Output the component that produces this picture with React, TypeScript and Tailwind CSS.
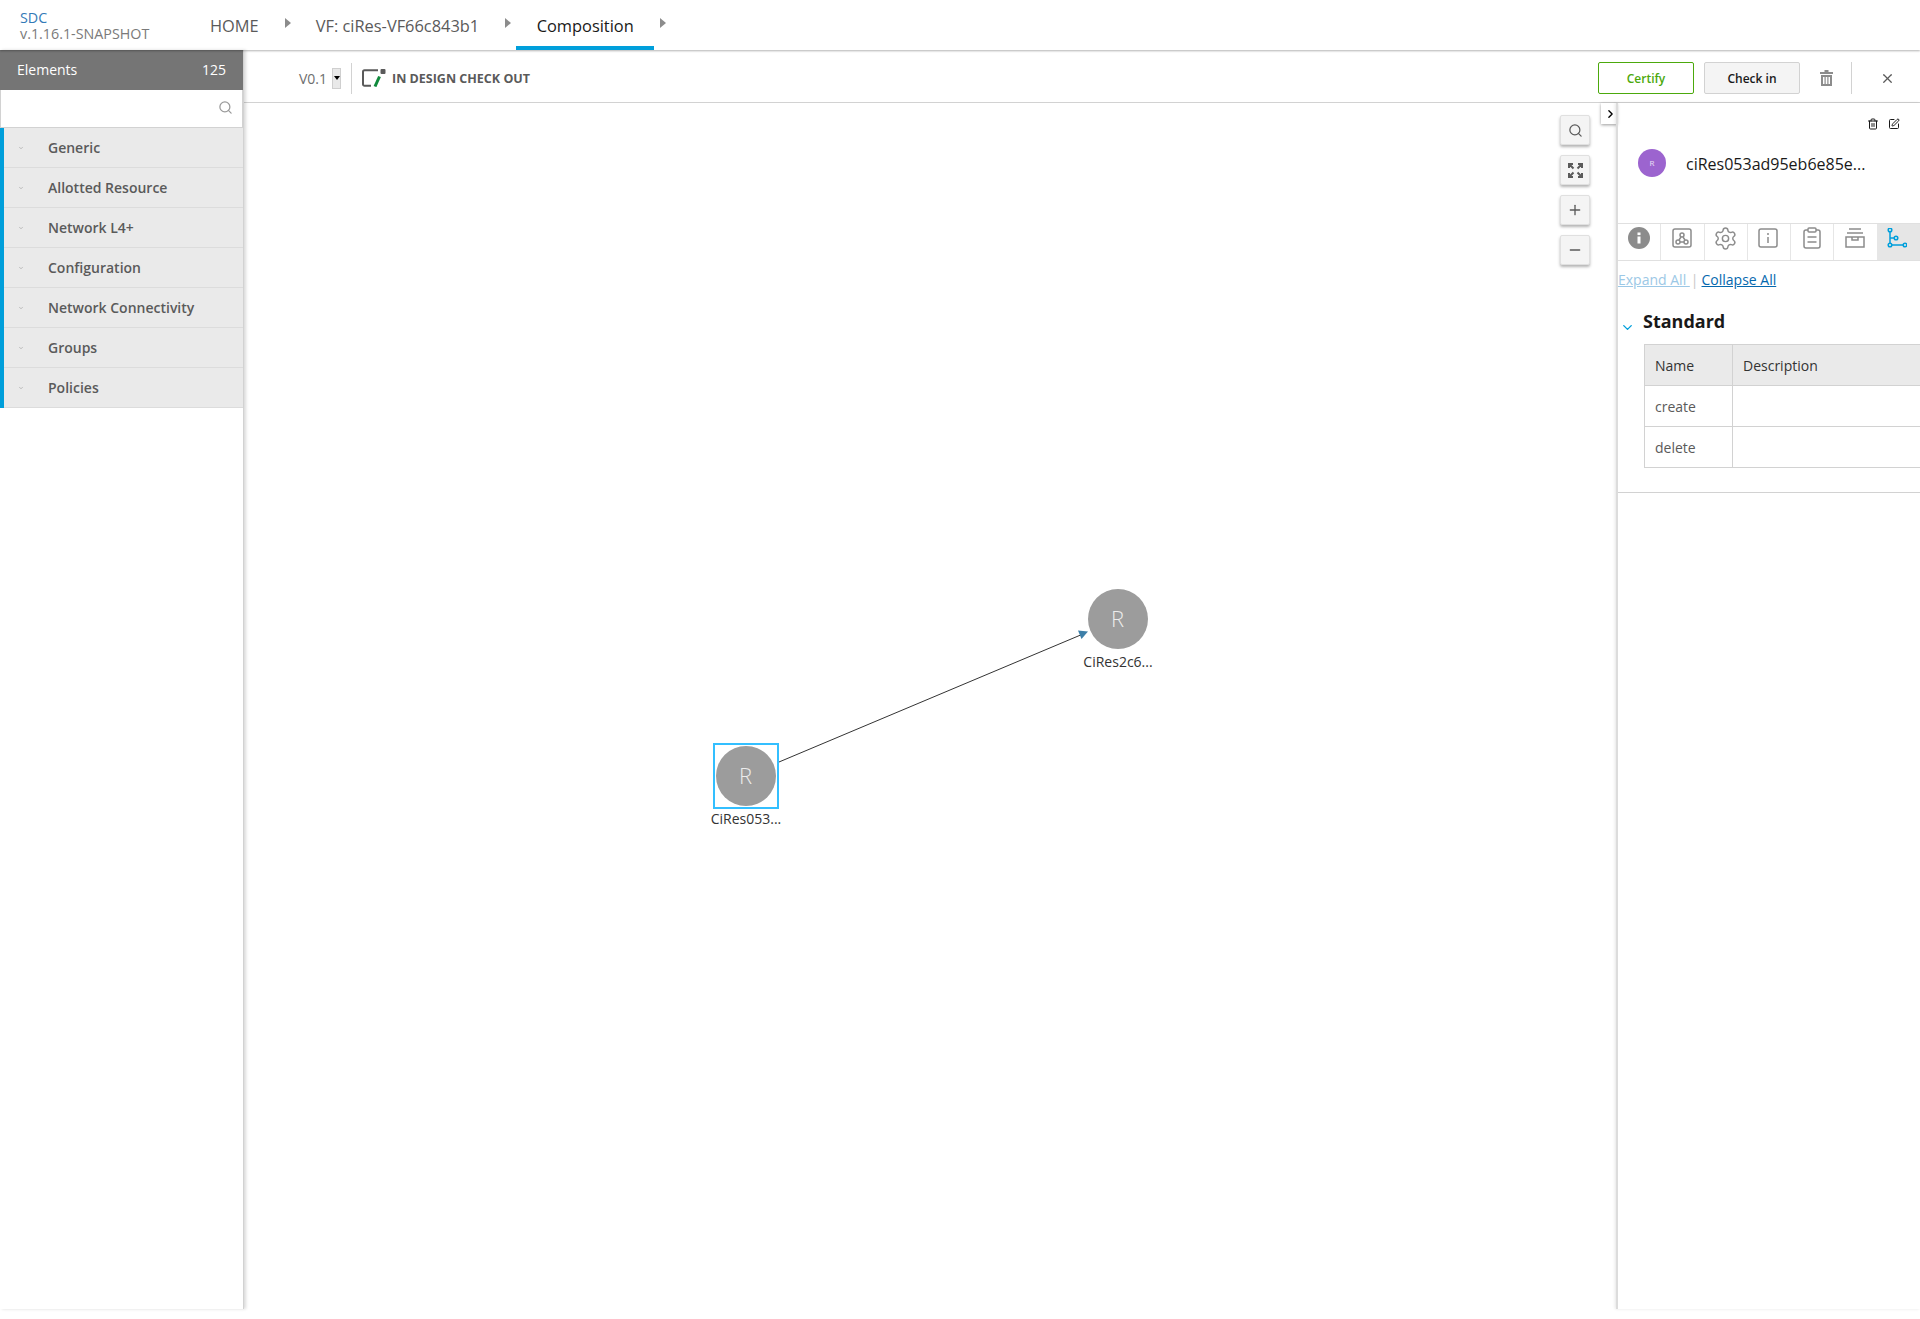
import React from 'react';
import { Search, ChevronDown, ChevronRight, X, Plus, Minus, Trash2, SquarePen, Settings } from 'lucide-react';

const categories = ['Generic', 'Allotted Resource', 'Network L4+', 'Configuration', 'Network Connectivity', 'Groups', 'Policies'];

const Caret = () => <div className="h-0 w-0 border-y-[5px] border-l-[6px] border-y-transparent border-l-[#8c8c8c]" />;

const CanvasButton = ({ children }: { children: React.ReactNode }) => (
  <div className="flex h-[30px] w-[30px] items-center justify-center rounded-[2px] border border-[#e0e0e0] bg-[#f4f4f4] text-[#5a5a5a] shadow-[0_2px_3px_rgba(0,0,0,0.3)]">
    {children}
  </div>
);

const Node = ({ className, label }: { className: string; label: string }) => (
  <div className={`absolute flex w-[80px] flex-col items-center ${className}`}>
    <div className="flex h-[60px] w-[60px] items-center justify-center rounded-full bg-[#9c9c9c] pb-[1px] pr-[1px] text-[22px] font-light text-[#ececec]">R</div>
    <div className="mt-[4px] whitespace-nowrap text-[14px] leading-[18px] text-[#333]">{label}</div>
  </div>
);

const Tab = ({ children, active }: { children: React.ReactNode; active?: boolean }) => (
  <div className={`flex h-full flex-1 items-center justify-center border-r border-[#e6e6e6] pb-[8px] last:border-r-0 ${active ? 'bg-[#e6e6e6] text-[#009fdb]' : 'text-[#8c8c8c]'}`}>
    {children}
  </div>
);

export default function App() {
  return (
    <div className="flex h-[1319px] w-[1920px] flex-col overflow-hidden bg-white font-['Open_Sans',sans-serif]">
      <header className="relative z-20 flex h-[50px] items-center shadow-[0_1px_2px_rgba(0,0,0,0.3)]">
        <div className="w-[210px] pl-[20px] pt-[1px] text-[14.3px] leading-[16px]">
          <div className="text-[#337ab7]">SDC</div>
          <div className="text-[#7a7a7a]">v.1.16.1-SNAPSHOT</div>
        </div>
        <div className="pt-[2px] text-[16.4px] text-[#5a5a5a]">HOME</div>
        <div className="ml-[26px] mb-[4px]"><Caret /></div>
        <div className="ml-[25px] pt-[2px] text-[16.4px] text-[#5a5a5a]">VF: ciRes-VF66c843b1</div>
        <div className="ml-[26px] mb-[4px]"><Caret /></div>
        <div className="relative ml-[5px] flex h-[50px] w-[138px] items-center justify-center pt-[2px] text-[16.4px] text-[#191919]">
          Composition
          <div className="absolute bottom-0 left-0 h-[4px] w-full bg-[#009fdb]" />
        </div>
        <div className="ml-[6px] mb-[4px]"><Caret /></div>
      </header>

      <div className="flex h-[1259px]">
        <aside className="relative z-10 w-[244px] border-r border-[#d2d2d2] shadow-[2px_0_3px_rgba(0,0,0,0.15)]">
          <div className="flex h-[40px] items-center justify-between bg-[#757575] px-[17px] pb-[2px] text-[14px] font-medium text-white">
            <span>Elements</span>
            <span className="font-normal">125</span>
          </div>
          <div className="flex h-[38px] items-center justify-end border-x border-b border-[#d2d2d2] bg-white pb-[2px] pr-[9px]">
            <Search size={15} className="text-[#9a9a9a]" />
          </div>
          <div className="border-l-[4px] border-[#009fdb]">
            {categories.map((name) => (
              <div key={name} className="flex h-[40px] items-center border-b border-[#dcdcdc] bg-[#eaeaea] text-[14px] font-semibold text-[#5a5a5a]">
                <ChevronDown size={6} className="ml-[14px] text-[#8c8c8c]" />
                <span className="ml-[24px]">{name}</span>
              </div>
            ))}
          </div>
        </aside>

        <main className="flex flex-1 flex-col">
          <div className="flex h-[53px] items-center border-b border-[#d2d2d2] pt-[4px]">
            <span className="ml-[55px] text-[14px] text-[#6e6e6e]">V0.1</span>
            <div className="ml-[5px] flex h-[21px] w-[9px] items-center justify-center border border-[#cfcfcf] bg-[#e9e9e9]">
              <div className="h-0 w-0 border-x-[3px] border-t-[4px] border-x-transparent border-t-black" />
            </div>
            <div className="ml-[10px] h-[31px] w-px bg-[#d2d2d2]" />
            <svg className="ml-[10px]" width="25" height="18" viewBox="0 0 25 18" fill="none">
              <path d="M16 1.2H2.5a1.5 1.5 0 0 0-1.5 1.5v12.6a1.5 1.5 0 0 0 1.5 1.5H9" stroke="#5a5a5a" strokeWidth="2" />
              <path d="M13 17.5l4.5-10" stroke="#0f8a3c" strokeWidth="3" />
              <rect x="18.5" y="0" width="5" height="5" rx="1" fill="#5a5a5a" />
            </svg>
            <span className="ml-[5px] pt-[2px] text-[12.5px] font-bold text-[#5a5a5a]">IN DESIGN CHECK OUT</span>
            <div className="ml-auto flex h-[32px] w-[96px] items-center justify-center rounded-[2px] border border-[#4ca90c] pt-[1px] text-[12px] font-semibold text-[#4ca90c]">Certify</div>
            <div className="ml-[10px] flex h-[32px] w-[96px] items-center justify-center rounded-[2px] border border-[#d2d2d2] bg-[#f4f4f4] pt-[1px] text-[12px] font-semibold text-[#191919]">Check in</div>
            <svg className="ml-[20px]" width="13" height="16" viewBox="0 0 13 16" fill="#8c8c8c">
              <path d="M0 2h4.5V0h4v2H13v2H0z" />
              <path d="M1 5h11v11H1zM3 7v7h1.5V7zm2.7 0v7h1.6V7zm2.8 0v7H10V7z" fillRule="evenodd" />
            </svg>
            <div className="ml-[18px] h-[32px] w-px bg-[#d2d2d2]" />
            <X size={15} className="ml-[28px] mr-[25px] text-[#5a5a5a]" />
          </div>

          <div className="flex flex-1">
            <div className="relative flex-1">
              <div className="absolute right-[26px] top-[12px] flex flex-col gap-[10px]">
                <CanvasButton><Search size={15} /></CanvasButton>
                <CanvasButton>
                  <svg width="15" height="15" viewBox="0 0 15 15" fill="none" stroke="currentColor" strokeWidth="2">
                    <path d="M1 5V1h4M10 1h4v4M14 10v4h-4M5 14H1v-4M1.5 1.5l4 4M13.5 1.5l-4 4M13.5 13.5l-4-4M1.5 13.5l4-4" />
                  </svg>
                </CanvasButton>
                <CanvasButton><Plus size={16} /></CanvasButton>
                <CanvasButton><Minus size={16} /></CanvasButton>
              </div>
              <div className="absolute -right-px top-0 flex h-[21px] w-[16px] items-center justify-center bg-white shadow-[0_1px_3px_rgba(0,0,0,0.4)]">
                <ChevronRight size={14} strokeWidth={2.5} className="ml-[3px] text-black" />
              </div>

              <svg className="absolute left-[499px] top-[500px]" width="360" height="170" viewBox="0 0 360 170" fill="none">
                <line x1="36" y1="159" x2="340" y2="31" stroke="#333" strokeWidth="1" />
                <path d="M345 28.5L335 27.5L338.5 36Z" fill="#3d7fa8" />
              </svg>

              <div className="absolute left-[469px] top-[640px] h-[66px] w-[66px] border-[2px] border-[#33bfff]" />
              <Node className="left-[462px] top-[643px]" label="CiRes053..." />
              <Node className="left-[834px] top-[486px]" label="CiRes2c6..." />
            </div>

            <div className="relative z-[5] flex w-[304px] flex-col border-l-[2px] border-[#dcdcdc] shadow-[-1px_0_3px_rgba(0,0,0,0.1)]">
              <div className="relative h-[120px]">
                <div className="absolute right-[20px] top-[15px] flex gap-[9px] text-[#191919]">
                  <Trash2 size={12} />
                  <SquarePen size={12} />
                </div>
                <div className="absolute left-[20px] top-[46px] flex items-center">
                  <div className="flex h-[28px] w-[28px] items-center justify-center rounded-full bg-[#9c64cf] text-[8px] text-white/80">R</div>
                  <span className="ml-[20px] pt-[2px] text-[16px] text-[#191919]">ciRes053ad95eb6e85e...</span>
                </div>
              </div>
              <div className="flex h-[38px] border-y border-[#e0e0e0]">
                <Tab>
                  <svg width="22" height="22" viewBox="0 0 22 22">
                    <circle cx="11" cy="11" r="11" fill="#8c8c8c" />
                    <rect x="9.5" y="9.5" width="3" height="7" fill="#fff" />
                    <rect x="9.5" y="5.5" width="3" height="2.6" fill="#fff" />
                  </svg>
                </Tab>
                <Tab>
                  <svg width="20" height="20" viewBox="0 0 20 20" fill="none" stroke="currentColor" strokeWidth="1.5">
                    <rect x="1" y="1" width="18" height="18" rx="2" />
                    <circle cx="10" cy="7" r="2" />
                    <circle cx="6" cy="14" r="2" />
                    <circle cx="14" cy="14" r="2" />
                    <path d="M9 9l-2 3M11 9l2 3M8 14h4" />
                  </svg>
                </Tab>
                <Tab><Settings size={25} strokeWidth={1.4} /></Tab>
                <Tab>
                  <svg className="mr-[1px]" width="20" height="20" viewBox="0 0 20 20" fill="none" stroke="currentColor" strokeWidth="1.5">
                    <rect x="1" y="1" width="18" height="18" rx="2" />
                    <path d="M10 9v6M10 5v2" />
                  </svg>
                </Tab>
                <Tab>
                  <svg width="18" height="22" viewBox="0 0 18 22" fill="none" stroke="currentColor" strokeWidth="1.5">
                    <rect x="1" y="3" width="16" height="18" rx="2" />
                    <rect x="5" y="1" width="8" height="4" rx="1" fill="#fff" />
                    <path d="M4.5 10h9M4.5 15h9" />
                  </svg>
                </Tab>
                <Tab>
                  <svg className="mr-[2px]" width="20" height="20" viewBox="0 0 20 20" fill="none" stroke="currentColor" strokeWidth="1.5">
                    <path d="M4 1h12M2 5h16M1 9h18v10H1zM7 9v3h6V9" />
                  </svg>
                </Tab>
                <Tab active>
                  <svg className="mr-[3px]" width="20" height="20" viewBox="0 0 20 20" fill="none" stroke="currentColor" strokeWidth="1.5">
                    <circle cx="3" cy="2" r="1.8" />
                    <circle cx="3" cy="17" r="1.8" />
                    <circle cx="9" cy="10" r="1.8" />
                    <circle cx="18" cy="17" r="1.8" />
                    <path d="M3 4v11M4.8 17h11.4M3 10h4" />
                  </svg>
                </Tab>
              </div>
              <div className="pt-[9px]">
                <div className="flex items-center whitespace-pre text-[14px] leading-[20px]">
                  <span className="text-[#9cc8e6] underline">Expand All </span>
                  <span className="ml-[1px] text-[#c8c8c8]">|</span>
                  <span className="ml-[3px] text-[#0568ae] underline">Collapse All</span>
                </div>
                <div className="mt-[19px] flex items-start">
                  <ChevronDown size={15} strokeWidth={2.2} className="ml-[2px] mt-[11px] text-[#009fdb]" />
                  <span className="ml-[8px] text-[18px] font-bold leading-[24px] text-[#191919]">Standard</span>
                </div>
                <div className="ml-[26px] mt-[9px] border-l border-t border-[#d2d2d2] text-[14px]">
                  <div className="flex h-[41px] border-b border-[#d2d2d2] bg-[#eaeaea] text-[#333]">
                    <div className="flex w-[88px] items-center border-r border-[#d2d2d2] pl-[10px]">Name</div>
                    <div className="flex flex-1 items-center pl-[10px]">Description</div>
                  </div>
                  {['create', 'delete'].map((op) => (
                    <div key={op} className="flex h-[41px] border-b border-[#d2d2d2] text-[#5a5a5a]">
                      <div className="flex w-[88px] items-center border-r border-[#d2d2d2] pl-[10px]">{op}</div>
                      <div className="flex-1" />
                    </div>
                  ))}
                </div>
                <div className="mt-[24px] border-b border-[#d2d2d2]" />
              </div>
            </div>
          </div>
        </main>
      </div>
      <div className="h-[10px]" />
    </div>
  );
}
